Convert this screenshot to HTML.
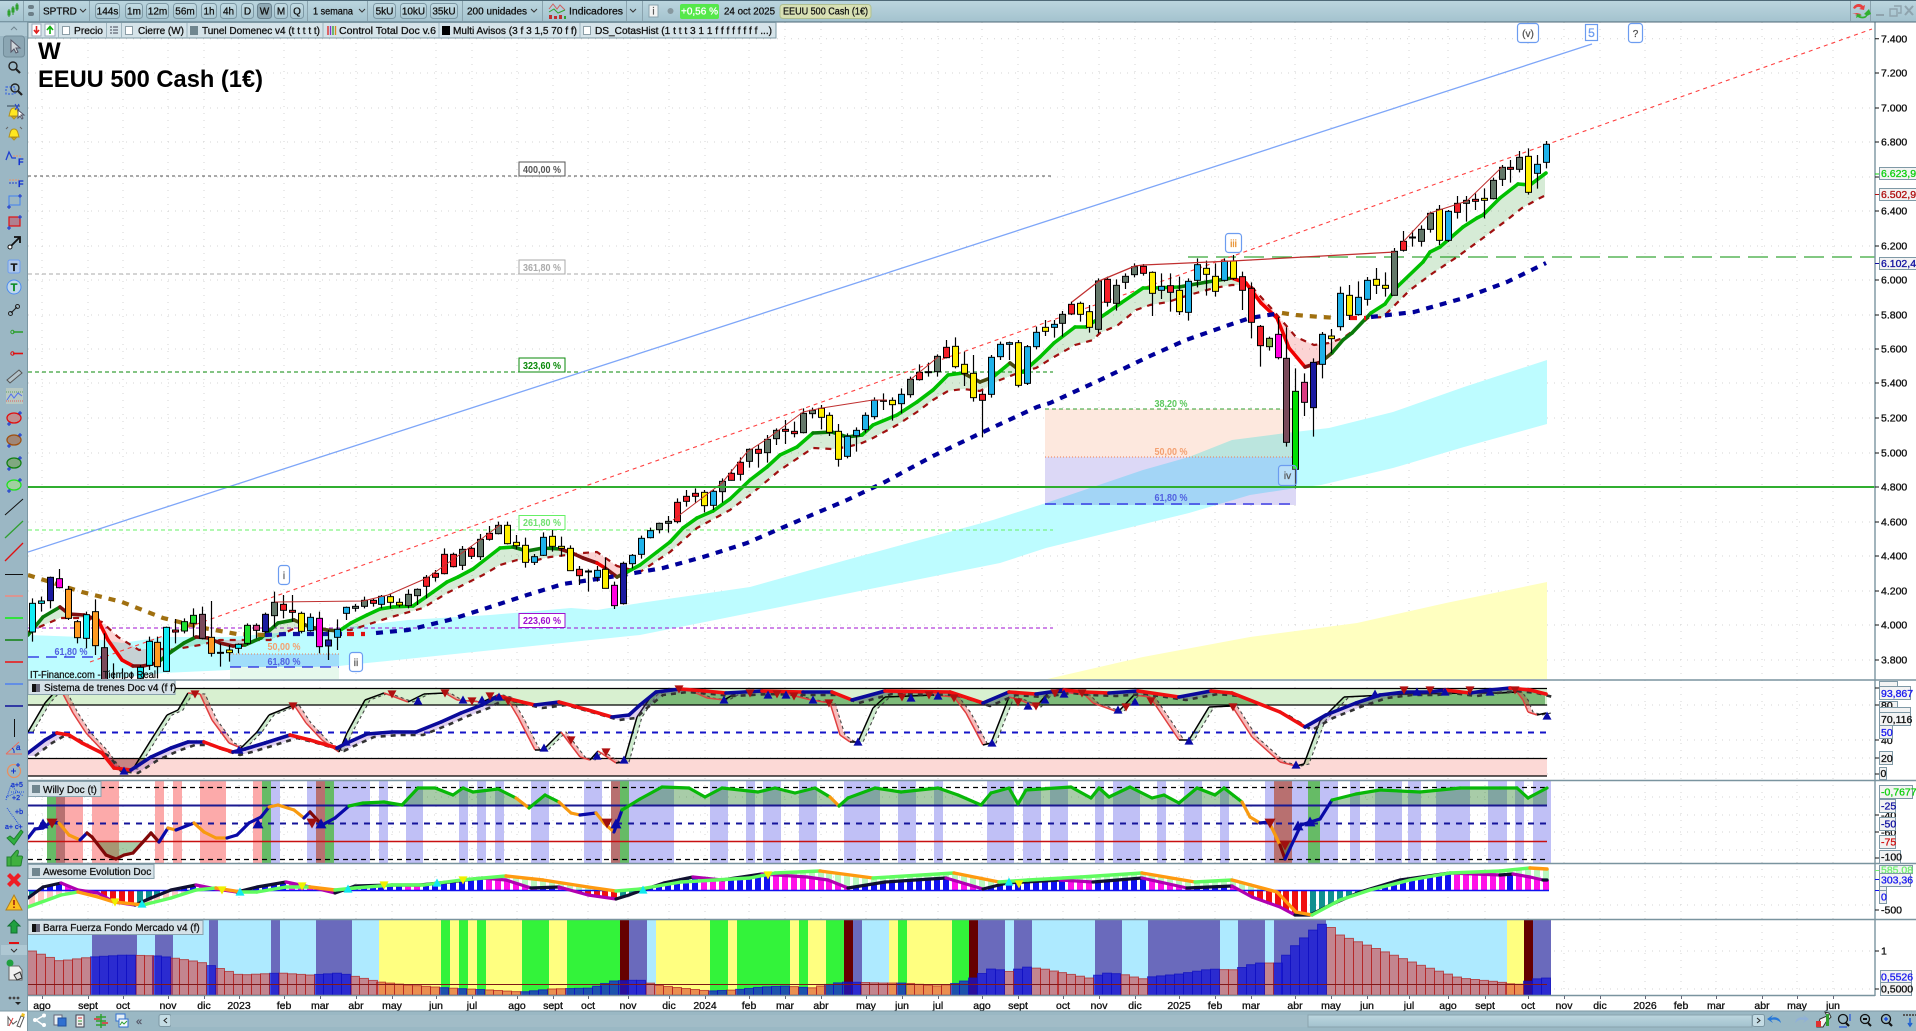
<!DOCTYPE html>
<html lang="es"><head><meta charset="utf-8"><title>EEUU 500 Cash (1€)</title>
<style>
html,body{margin:0;padding:0;background:#fff;width:1916px;height:1031px;overflow:hidden}
svg{display:block}
text{font-family:"Liberation Sans",Arial,sans-serif;font-size:10px;fill:#111;stroke:#111;stroke-width:.28}
.a{font-size:10.5px;stroke-width:.32}
.m{text-anchor:middle}
.b{font-weight:bold;stroke:none}
.btn{fill:url(#gb);stroke:#7d98a4}
.fl{fill:#f3f3f3;stroke:#7f99a6}
.mul{mix-blend-mode:multiply}
</style></head><body>
<svg id="s" xmlns="http://www.w3.org/2000/svg" width="1916" height="1031" viewBox="0 0 1916 1031">
<defs>
<linearGradient id="gb" x1="0" y1="0" x2="0" y2="1"><stop offset="0" stop-color="#c4dce4"/><stop offset="1" stop-color="#a8c6d1"/></linearGradient>
<linearGradient id="gt" x1="0" y1="0" x2="0" y2="1"><stop offset="0" stop-color="#bcd6df"/><stop offset="1" stop-color="#a3c2ce"/></linearGradient>
<clipPath id="cm"><rect x="28" y="22" width="1847" height="657"/></clipPath>
</defs>
<rect width="1916" height="1031" fill="#fff"/>
<g id="grid"></g>
<g clip-path="url(#cm)">
<g id="bands"></g>
<rect class="mul" x="1045" y="409" width="251" height="48" fill="#fde8de"/>
<rect class="mul" x="1045" y="457" width="251" height="48" fill="#dcd8f6"/>
<rect class="mul" x="230" y="654" width="109" height="13" fill="#d8e0fa"/>
<rect x="230" y="667" width="109" height="13" fill="#e6f8ec"/>
<g fill="none" stroke-width="1">
<path d="M28 176H1053" stroke="#555" stroke-dasharray="3 3"/>
<path d="M28 274H1053" stroke="#aaa" stroke-dasharray="4 3"/>
<path d="M28 372H1053" stroke="#0a8a0a" stroke-dasharray="4 3"/>
<path d="M28 530H1053" stroke="#66f066" stroke-dasharray="4 3"/>
<path d="M28 628H1053" stroke="#a010d0" stroke-dasharray="4 3"/>
<path d="M1045 409H1296" stroke="#30a030" stroke-dasharray="4 3"/>
<path d="M1045 457H1296" stroke="#f08050" stroke-dasharray="1 2"/>
<path d="M1045 504H1296" stroke="#2020e0" stroke-width="1.3" stroke-dasharray="11 7"/>
<path d="M230 654H339" stroke="#f08050" stroke-dasharray="1 2"/>
<path d="M230 667H339" stroke="#2020e0" stroke-width="1.3" stroke-dasharray="11 7"/>
<path d="M28 657H102" stroke="#2020e0" stroke-width="1.3" stroke-dasharray="11 7"/>
<path d="M1188 257H1875" stroke="#38a838" stroke-width="1.2" stroke-dasharray="20 8"/>
<path d="M28 552L1592 44" stroke="#7ea6f8" stroke-width="1.3"/>
<path d="M90 662L1872 29" stroke="#ff4040" stroke-width="1.1" stroke-dasharray="4 4"/>
</g>
<g id="main"></g>
<rect x="28" y="486" width="1847" height="2" fill="#30ae30"/>
</g>
<!-- labels main -->
<g>
<text class="m b" x="1171" y="407" textLength="33" lengthAdjust="spacingAndGlyphs" style="fill:#5cc85c">38,20 %</text>
<text class="m b" x="1171" y="455" textLength="33" lengthAdjust="spacingAndGlyphs" style="fill:#f4a070">50,00 %</text>
<text class="m b" x="1171" y="501" textLength="33" lengthAdjust="spacingAndGlyphs" style="fill:#5060e0">61,80 %</text>
<text class="m b" x="284" y="650" textLength="33" lengthAdjust="spacingAndGlyphs" style="fill:#f4a070">50,00 %</text>
<text class="m b" x="284" y="665" textLength="33" lengthAdjust="spacingAndGlyphs" style="fill:#5060e0">61,80 %</text>
<text class="m b" x="71" y="655" textLength="33" lengthAdjust="spacingAndGlyphs" style="fill:#5060e0">61,80 %</text>
<text x="30" y="678" textLength="126" lengthAdjust="spacingAndGlyphs">IT-Finance.com - Tiempo Real</text>
<rect x="519" y="162" width="46" height="14" fill="#fff" stroke="#555"/><text class="m b" x="542" y="173" textLength="38" lengthAdjust="spacingAndGlyphs" style="fill:#555">400,00 %</text>
<rect x="519" y="260" width="46" height="14" fill="#fff" stroke="#aaa"/><text class="m b" x="542" y="271" textLength="38" lengthAdjust="spacingAndGlyphs" style="fill:#aaa">361,80 %</text>
<rect x="519" y="358" width="46" height="14" fill="#fff" stroke="#0a8a0a"/><text class="m b" x="542" y="369" textLength="38" lengthAdjust="spacingAndGlyphs" style="fill:#0a8a0a">323,60 %</text>
<rect x="519" y="515.5" width="46" height="14" fill="#fff" stroke="#66f066"/><text class="m b" x="542" y="526" textLength="38" lengthAdjust="spacingAndGlyphs" style="fill:#70e070">261,80 %</text>
<rect x="519" y="613.5" width="46" height="14" fill="#fff" stroke="#a010d0"/><text class="m b" x="542" y="624" textLength="38" lengthAdjust="spacingAndGlyphs" style="fill:#a010d0">223,60 %</text>
<g fill="#fff" stroke="#6c9cf0" stroke-width="1.2">
<rect x="1517.5" y="23.5" width="21" height="19" rx="3"/><rect x="1585.5" y="24.5" width="12" height="16"/><rect x="1628.5" y="23.5" width="14" height="19" rx="3"/>
<rect x="1225.5" y="233.5" width="16" height="19" rx="3"/><rect x="1278.5" y="465.5" width="18" height="20" rx="3" fill-opacity=".25"/>
<rect x="278.5" y="565.5" width="11" height="19" rx="3"/><rect x="349.5" y="652.5" width="13" height="19" rx="3"/></g>
<text class="m" x="1528" y="37" style="fill:#555;stroke:#555">(v)</text>
<text class="m" x="1591.5" y="37" style="fill:#6c9cf0;stroke:#6c9cf0;font-size:12px">5</text>
<text class="m" x="1635.5" y="37" style="fill:#555;stroke:#555">?</text>
<text class="m" x="1233.5" y="247" style="fill:#e89030;stroke:#e89030">iii</text>
<text class="m" x="1287.5" y="479" style="fill:#555;stroke:#555">iv</text>
<text class="m" x="284" y="579" style="fill:#555;stroke:#555">i</text>
<text class="m" x="356" y="666" style="fill:#555;stroke:#555">ii</text>
<text x="38" y="59" class="b" style="font-size:24px;fill:#000">W</text>
<text x="38" y="87" class="b" textLength="225" lengthAdjust="spacingAndGlyphs" style="font-size:24px;fill:#000">EEUU 500 Cash (1€)</text>
</g>
<!-- panels -->
<rect x="28" y="688" width="1519" height="17" fill="#d8f0d0"/>
<rect x="28" y="758" width="1519" height="18" fill="#fcd9d6"/>
<g id="stoch"></g>
<g id="willy"></g>
<g id="awe"></g>
<g id="barra"></g>
<!-- panel borders -->
<g stroke="#7a949f" fill="none" stroke-width="1.4">
<path d="M28 680H1916M28 780.5H1916M28 863.5H1916M28 919.5H1916M28 995.5H1875M1875 22V996"/>
</g>
<g stroke="#111" stroke-width="1">
<path d="M1875 38.7h4M1875 73h4M1875 108h4M1875 142h4M1875 177h4M1875 211h4M1875 246h4M1875 280h4M1875 315h4M1875 349h4M1875 383h4M1875 418h4M1875 453h4M1875 487h4M1875 522h4M1875 556h4M1875 591h4M1875 625h4M1875 660h4M1875 688h4M1875 705h4M1875 740h4M1875 758h4M1875 774h4M1875 815h4M1875 832h4M1875 858h4M1875 910h4M1875 951h4M1875 989h4"/></g>
<g class="ax">
<text class="a" x="1881" y="42.5">7.400</text><text class="a" x="1881" y="76.5">7.200</text><text class="a" x="1881" y="111.5">7.000</text><text class="a" x="1881" y="145.5">6.800</text>
<text class="a" x="1881" y="214.5">6.400</text><text class="a" x="1881" y="249.5">6.200</text><text class="a" x="1881" y="283.5">6.000</text><text class="a" x="1881" y="318.5">5.800</text>
<text class="a" x="1881" y="352.5">5.600</text><text class="a" x="1881" y="386.5">5.400</text><text class="a" x="1881" y="421.5">5.200</text><text class="a" x="1881" y="456.5">5.000</text>
<text class="a" x="1881" y="490.5">4.800</text><text class="a" x="1881" y="525.5">4.600</text><text class="a" x="1881" y="559.5">4.400</text><text class="a" x="1881" y="594.5">4.200</text>
<text class="a" x="1881" y="628.5">4.000</text><text class="a" x="1881" y="663.5">3.800</text>
<rect class="fl" x="1879.5" y="167.5" width="40" height="12"/><text class="a" x="1881" y="177" style="fill:#10d010;stroke:#10d010">6.623,91</text>
<rect class="fl" x="1879.5" y="188.5" width="40" height="12"/><text class="a" x="1881" y="198" style="fill:#b01010;stroke:#b01010">6.502,93</text>
<rect class="fl" x="1879.5" y="257.5" width="40" height="12"/><text class="a" x="1881" y="267" style="fill:#1010a0;stroke:#1010a0">6.102,42</text>
<path d="M1875 174h4" stroke="#10d010"/><path d="M1875 194.5h4" stroke="#b01010"/><path d="M1875 263.5h4" stroke="#1010a0"/>
<!-- panel 2 -->
<rect class="fl" x="1879.5" y="681.5" width="18" height="6"/>
<rect class="fl" x="1879.5" y="686.5" width="31" height="13"/><text class="a" x="1881" y="697" style="fill:#1a1af0;stroke:#1a1af0">93,867</text>
<rect class="fl" x="1879.5" y="701.5" width="18" height="7"/><text class="a" x="1881" y="709">80</text>
<rect class="fl" x="1879.5" y="707.5" width="31" height="6"/>
<rect class="fl" x="1879.5" y="712.5" width="31" height="13"/><text class="a" x="1881" y="723">70,116</text>
<text class="a" x="1881" y="744">40</text>
<rect class="fl" x="1879.5" y="725.5" width="13" height="13"/><text class="a" x="1881" y="736" style="fill:#1a1af0;stroke:#1a1af0">50</text>
<rect class="fl" x="1879.5" y="751.5" width="13" height="13"/><text class="a" x="1881" y="762">20</text>
<rect class="fl" x="1879.5" y="767.5" width="7" height="12"/><text class="a" x="1880.5" y="777">0</text>
<!-- panel 3 -->
<text class="a" x="1881" y="819">-40</text><text class="a" x="1881" y="836">-60</text>
<rect class="fl" x="1879.5" y="785.5" width="33" height="13"/><text class="a" x="1881" y="795.5" style="fill:#10d010;stroke:#10d010">-0,7677</text>
<rect class="fl" x="1879.5" y="799.5" width="16" height="13"/><text class="a" x="1881" y="809.5" style="fill:#1010a0;stroke:#1010a0">-25</text>
<rect class="fl" x="1879.5" y="817.5" width="16" height="13"/><text class="a" x="1881" y="827.5" style="fill:#1010a0;stroke:#1010a0">-50</text>
<rect class="fl" x="1879.5" y="835.5" width="16" height="13"/><text class="a" x="1881" y="845.5" style="fill:#d01010;stroke:#d01010">-75</text>
<rect class="fl" x="1879.5" y="850.5" width="21" height="13"/><text class="a" x="1881" y="860.5">-100</text>
<!-- panel 4 -->
<rect class="fl" x="1879.5" y="865.5" width="33" height="8"/><text class="a" x="1881" y="873.5" style="fill:#70f070;stroke:#70f070">585,08</text>
<rect class="fl" x="1879.5" y="873.5" width="31" height="13"/><text class="a" x="1881" y="883.5" style="fill:#1a1af0;stroke:#1a1af0">303,36</text>
<rect class="fl" x="1879.5" y="886.5" width="7" height="5"/>
<rect class="fl" x="1879.5" y="890.5" width="7" height="13"/><text class="a" x="1881" y="900.5" style="fill:#1a1af0;stroke:#1a1af0">0</text>
<text class="a" x="1881" y="913.5">-500</text>
<path d="M1875 890.5h4" stroke="#1010f0"/><path d="M1875 870.5h4" stroke="#70f070"/><path d="M1875 879.5h4" stroke="#1010f0"/>
<!-- panel 5 -->
<text class="a" x="1881" y="954.5">1</text>
<rect class="fl" x="1880.5" y="970.5" width="31" height="13"/><text class="a" x="1881" y="980.5" style="fill:#1a1af0;stroke:#1a1af0">0,5526</text>
<rect class="fl" x="1880.5" y="982.5" width="31" height="13"/><text class="a" x="1881" y="992.5">0,5000</text>
</g>
<!-- date axis -->
<g id="dt"></g>
<g>
<text class="a m" x="42" y="1009">ago</text><text class="a m" x="88" y="1009">sept</text><text class="a m" x="123" y="1009">oct</text><text class="a m" x="168" y="1009">nov</text><text class="a m" x="204" y="1009">dic</text><text class="a m" x="239" y="1009">2023</text><text class="a m" x="284" y="1009">feb</text><text class="a m" x="320" y="1009">mar</text><text class="a m" x="356" y="1009">abr</text><text class="a m" x="392" y="1009">may</text><text class="a m" x="436" y="1009">jun</text><text class="a m" x="472" y="1009">jul</text><text class="a m" x="517" y="1009">ago</text><text class="a m" x="553" y="1009">sept</text><text class="a m" x="588" y="1009">oct</text><text class="a m" x="628" y="1009">nov</text><text class="a m" x="669" y="1009">dic</text><text class="a m" x="705" y="1009">2024</text><text class="a m" x="749" y="1009">feb</text><text class="a m" x="785" y="1009">mar</text><text class="a m" x="821" y="1009">abr</text><text class="a m" x="866" y="1009">may</text><text class="a m" x="902" y="1009">jun</text><text class="a m" x="938" y="1009">jul</text><text class="a m" x="982" y="1009">ago</text><text class="a m" x="1018" y="1009">sept</text><text class="a m" x="1063" y="1009">oct</text><text class="a m" x="1099" y="1009">nov</text><text class="a m" x="1135" y="1009">dic</text><text class="a m" x="1179" y="1009">2025</text><text class="a m" x="1215" y="1009">feb</text><text class="a m" x="1251" y="1009">mar</text><text class="a m" x="1295" y="1009">abr</text><text class="a m" x="1331" y="1009">may</text><text class="a m" x="1367" y="1009">jun</text><text class="a m" x="1409" y="1009">jul</text><text class="a m" x="1448" y="1009">ago</text><text class="a m" x="1485" y="1009">sept</text><text class="a m" x="1528" y="1009">oct</text><text class="a m" x="1564" y="1009">nov</text><text class="a m" x="1600" y="1009">dic</text><text class="a m" x="1645" y="1009">2026</text><text class="a m" x="1681" y="1009">feb</text><text class="a m" x="1716" y="1009">mar</text><text class="a m" x="1762" y="1009">abr</text><text class="a m" x="1797" y="1009">may</text><text class="a m" x="1833" y="1009">jun</text>
</g>
<!-- panel labels -->
<g>
<rect x="28" y="680.5" width="147" height="14" fill="#d6e2e8" stroke="#8aa3ae"/><rect x="32" y="684" width="4" height="8" fill="#111"/><rect x="36" y="684" width="4" height="8" fill="#667"/><text x="44" y="691">Sistema de trenes Doc v4 (f f)</text>
<rect x="28" y="781.5" width="73" height="15" fill="#d6e2e8" stroke="#8aa3ae"/><rect x="32" y="785" width="8" height="8" fill="#70868f"/><text x="43" y="793">Willy Doc (t)</text>
<rect x="28" y="864.5" width="126" height="14" fill="#d6e2e8" stroke="#8aa3ae"/><rect x="32" y="868" width="8" height="8" fill="#70868f"/><text x="43" y="875">Awesome Evolution Doc</text>
<rect x="28" y="920.5" width="175" height="14" fill="#d6e2e8" stroke="#8aa3ae"/><rect x="32" y="924" width="4" height="8" fill="#111"/><rect x="36" y="924" width="4" height="8" fill="#667"/><text x="43" y="931">Barra Fuerza Fondo Mercado v4 (f)</text>
</g>
<!-- top toolbar -->
<rect x="0" y="0" width="1916" height="22" fill="url(#gt)"/>
<path d="M0 .5H1916M0 22H1916" stroke="#4f6a78"/>
<g stroke="#8aa3ae"><path d="M23.5 1V21M39.5 1V21M89.5 1V21M307.5 1V21M367.5 1V21M462.5 1V21M542.5 1V21M626.5 1V21M642.5 1V21M1850.5 1V21M1870.5 1V21"/></g>
<g stroke="#2a9a2a" fill="#30b030"><path d="M9 9v8M13 6v9M17 3v8" fill="none"/><rect x="8" y="11" width="2" height="4"/><rect x="12" y="8" width="2" height="4"/><rect x="16" y="5" width="2" height="4"/></g>
<g fill="#6c7f88"><rect x="28" y="5" width="6" height="4" rx="2"/><rect x="28" y="12" width="6" height="4" rx="2"/></g>
<text x="43" y="14.5">SPTRD</text><path d="M80 9l3 3 3-3" fill="none" stroke="#333"/>
<g>
<rect class="btn" x="95.5" y="3.5" width="24" height="15" rx="3"/><text class="m" x="107.5" y="14.5">144s</text>
<rect class="btn" x="125.5" y="3.5" width="17" height="15" rx="3"/><text class="m" x="134" y="14.5">1m</text>
<rect class="btn" x="146.5" y="3.5" width="22" height="15" rx="3"/><text class="m" x="157.5" y="14.5">12m</text>
<rect class="btn" x="173.5" y="3.5" width="23" height="15" rx="3"/><text class="m" x="185" y="14.5">56m</text>
<rect class="btn" x="201.5" y="3.5" width="15" height="15" rx="3"/><text class="m" x="209" y="14.5">1h</text>
<rect class="btn" x="220.5" y="3.5" width="16" height="15" rx="3"/><text class="m" x="228.5" y="14.5">4h</text>
<rect class="btn" x="241.5" y="3.5" width="12" height="15" rx="3"/><text class="m" x="247.5" y="14.5">D</text>
<rect x="257.5" y="3.5" width="14" height="15" rx="3" fill="#8fa8b3" stroke="#6a8390"/><text class="m" x="264.5" y="14.5">W</text>
<rect class="btn" x="274.5" y="3.5" width="13" height="15" rx="3"/><text class="m" x="281" y="14.5">M</text>
<rect class="btn" x="290.5" y="3.5" width="13" height="15" rx="3"/><text class="m" x="297" y="14.5">Q</text>
<text x="313" y="14.5" textLength="40" lengthAdjust="spacingAndGlyphs">1 semana</text><path d="M359 9l3 3 3-3" fill="none" stroke="#333"/>
<rect class="btn" x="373.5" y="3.5" width="22" height="15" rx="3"/><text class="m" x="384.5" y="14.5">5kU</text>
<rect class="btn" x="400.5" y="3.5" width="26" height="15" rx="3"/><text class="m" x="413.5" y="14.5">10kU</text>
<rect class="btn" x="430.5" y="3.5" width="27" height="15" rx="3"/><text class="m" x="444" y="14.5">35kU</text>
<text x="467" y="14.5" textLength="60" lengthAdjust="spacingAndGlyphs">200 unidades</text><path d="M531 9l3 3 3-3" fill="none" stroke="#333"/>
<path d="M549 9l4-5 4 5 3-4 5 5" fill="none" stroke="#d06060"/><path d="M549 12l5-3 4 4 7-3" fill="none" stroke="#30a030"/><path d="M549 15h3v4h-3zM554 16h3v3h-3zM559 15h3v4h-3z" fill="#c03030"/><path d="M564 16h2v3h-2z" fill="#30a030"/>
<text x="569" y="14.5" textLength="54" lengthAdjust="spacingAndGlyphs">Indicadores</text><path d="M630 9l3 3 3-3" fill="none" stroke="#333"/>
<rect x="649" y="5" width="9" height="12" fill="#f4f4f4" stroke="#8aa3ae"/><text class="m" x="653.5" y="14.5" style="fill:#555;stroke:#555">i</text>
<circle cx="670.5" cy="11" r="3" fill="#87989f"/>
<rect x="680" y="4" width="39" height="15" rx="2" fill="#55e84a"/><text class="m" x="699.5" y="14.5" style="fill:#fff;stroke:#fff">+0,56 %</text>
<text x="724" y="14.5" textLength="51" lengthAdjust="spacingAndGlyphs">24 oct 2025</text>
<rect x="780" y="4.5" width="91" height="14" rx="3" fill="#d8e0b4" stroke="#b0c090"/><text x="783" y="14.5" textLength="85" lengthAdjust="spacingAndGlyphs">EEUU 500 Cash (1€)</text>
</g>
<path d="M1853 8c2-5 8-5 10-2l2-1-1 5-5-1 2-1c-2-2-5-1-6 1zm-1 5l5 1-2 1c2 1 5 1 6-1l-4-1" fill="#e84040"/>
<path d="M1867 16c-1 3-7 3-9 1l-2 1 1-4 5 1-2 1c2 1 5 1 6-1l-2-1 5-5 2 5z" fill="#30b030"/>
<path d="M1876 15h8" stroke="#8fa3ad" stroke-width="2"/><path d="M1894 6h7v7h-3M1890 9h7v7h-7z" fill="none" stroke="#8fa3ad" stroke-width="1.4"/><path d="M1905 6l8 9M1913 6l-8 9" stroke="#8fa3ad" stroke-width="2"/>
<!-- legend row -->
<rect x="28" y="22.5" width="748" height="15.5" fill="#d5e3e9" stroke="#7d98a4"/>
<g stroke="#9fb5bf"><path d="M58.5 23V38M106.5 23V38M121.5 23V38M187 23V38M323 23V38M439 23V38M580 23V38"/></g>
<rect x="32" y="24" width="9" height="12" fill="#fff" stroke="#9ab"/><path d="M36.5 26v6m-2.500-2l2.500 3 2.500-3" stroke="#e02020" fill="none" stroke-width="1.600"/>
<rect x="45" y="24" width="10" height="12" fill="#fff" stroke="#9ab"/><path d="M50 34v-7m-3 3l3-3.500 3 3.500" stroke="#10b010" fill="none" stroke-width="1.600"/>
<rect x="62.500" y="26.500" width="7" height="8" fill="#fff" stroke="#8c9ea7"/><text x="74" y="34" textLength="29" lengthAdjust="spacingAndGlyphs">Precio</text>
<path d="M110 27h2M113 27h5M110 30h2M113 30h5M110 33h2M113 33h5" stroke="#445"/>
<rect x="125.500" y="26.500" width="7" height="8" fill="#fff" stroke="#8c9ea7"/><text x="138" y="34" textLength="46" lengthAdjust="spacingAndGlyphs">Cierre (W)</text>
<rect x="190" y="26" width="8" height="9" fill="#70868f"/><text x="202" y="34" textLength="118" lengthAdjust="spacingAndGlyphs">Tunel Domenec v4 (t t t t t)</text>
<path d="M328 26v9" stroke="#e02020" stroke-width="1.300"/><path d="M330.500 26v9" stroke="#8030d0" stroke-width="1.300"/><path d="M333 26v9" stroke="#30a030" stroke-width="1.300"/><path d="M335.500 26v9" stroke="#e08020" stroke-width="1.300"/>
<text x="339" y="34" textLength="97" lengthAdjust="spacingAndGlyphs">Control Total Doc v.6</text>
<rect x="442" y="26" width="8" height="9" fill="#000"/><text x="453" y="34" textLength="124" lengthAdjust="spacingAndGlyphs">Multi Avisos (3 f 3 1,5 70 f f)</text>
<rect x="583.500" y="26.500" width="7" height="8" fill="#fff" stroke="#8c9ea7"/><text x="595" y="34" textLength="177" lengthAdjust="spacingAndGlyphs">DS_CotasHist (1 t t t 3 1 1 f f f f f f f f ...)</text>
<!-- left toolbar -->
<rect x="0" y="22" width="28" height="989" fill="#9bb7c4"/>
<path d="M27.500 22V1031" stroke="#7d98a4"/>
<rect x="0" y="23" width="27" height="13" fill="#aec8d3"/>
<path d="M11 30l3-3 3 3" fill="none" stroke="#708590"/>
<rect x="3.500" y="36" width="21" height="21" rx="3" fill="#8ba6b3" stroke="#718c99"/>
<path d="M11 40v12l3-3 2 4 2-1-2-4h4z" fill="#cfd6da" stroke="#556"/>
<g fill="none" stroke="#222" stroke-width="1.400"><circle cx="13" cy="66" r="4"/><path d="M16 69l4 4" stroke-width="2.200"/><circle cx="15" cy="88" r="4"/><path d="M18 91l4 4" stroke-width="2.200"/></g>
<rect x="6" y="87" width="9" height="7" fill="none" stroke="#2050e0" stroke-dasharray="2 1.500"/>
<path d="M9 116c1-3 1-8 5-8s4 5 5 8zM12 117h4l-2 2z" fill="#ffe820" stroke="#b09020"/><path d="M7 106h13" stroke="#345"/><path d="M15 104l4 6M19 104l-4 6" stroke="#2040d0"/><path d="M18 110v8l2-2 2 3 1-1-2-3h3z" fill="#fff" stroke="#556"/>
<path d="M9 137c1-3 1-8 5-8s4 5 5 8zM12 138h4l-2 2z" fill="#ffe820" stroke="#b09020"/><path d="M8 127l-2 2M20 127l2 2" stroke="#666"/>
<path d="M6 160l3-8 3 6h4" fill="none" stroke="#2040d0" stroke-width="1.300"/><path d="M13 156h9" stroke="#f09060" stroke-dasharray="2 1"/><text x="18" y="165" style="fill:#1030d0;stroke:#1030d0;font-weight:bold;font-size:9px">F</text>
<path d="M9 180h10" stroke="#f09060" stroke-dasharray="2 1"/><path d="M9 183h9" stroke="#2040d0" stroke-dasharray="2 1"/><text x="18" y="187" style="fill:#1030d0;stroke:#1030d0;font-weight:bold;font-size:9px">F</text>
<rect x="9" y="196" width="11" height="9" fill="none" stroke="#4080f0"/><path d="M7 207h4M9 205v4M18 196h4M20 194v4" stroke="#1030d0"/>
<rect x="9" y="217" width="11" height="9" fill="#b08090" stroke="#e01010" stroke-width="1.200"/><path d="M7 228h4M9 226v4M18 217h4M20 215v4" stroke="#1030d0"/>
<path d="M10 247l9-9M14 237h6v6" fill="none" stroke="#111" stroke-width="1.800"/><circle cx="10" cy="247" r="2" fill="#fff" stroke="#111"/>
<rect x="8" y="260" width="12" height="13" rx="2" fill="#acc6e8" stroke="#6c9cf0"/><text class="m" x="14" y="271" style="font-weight:bold;font-size:11px;fill:#111">T</text>
<circle cx="14" cy="287" r="7" fill="#c0d8ec" stroke="#4c8cf0"/><text class="m" x="14" y="291" style="font-weight:bold;font-size:11px;fill:#0a8a20;stroke:#0a8a20">T</text>
<path d="M11 313l6-6" stroke="#222" stroke-width="1.200"/><circle cx="10.500" cy="313.500" r="2" fill="none" stroke="#222"/><circle cx="17.500" cy="306.500" r="2" fill="none" stroke="#222"/>
<path d="M13 332h10" stroke="#30a030" stroke-width="1.600"/><circle cx="12.500" cy="332" r="1.700" fill="none" stroke="#30a030"/>
<path d="M13 353.500h10" stroke="#e01010" stroke-width="1.600"/><circle cx="12.500" cy="353.500" r="1.700" fill="none" stroke="#e01010"/>
<path d="M7 380l12-10 3 3-12 10z" fill="#b4c4cb" stroke="#555"/>
<rect x="6" y="388" width="17" height="16" fill="#b8c9c2"/><path d="M6 392h17" stroke="#60a060" stroke-dasharray="1 1"/><path d="M6 401h17" stroke="#e06060" stroke-dasharray="1 1"/><path d="M7 400l4-6 3 4 4-5 4 3" fill="none" stroke="#5070f0"/>
<g stroke-width="1.300"><ellipse cx="14" cy="418" rx="7" ry="5" fill="#c09090" stroke="#e01010"/><ellipse cx="14" cy="440" rx="7" ry="5" fill="#a08878" stroke="#a05010"/><ellipse cx="14" cy="463" rx="7" ry="5" fill="#80a880" stroke="#108010"/><ellipse cx="14" cy="485" rx="7" ry="5" fill="#a0d0a0" stroke="#20e020"/></g>
<path d="M7 424h4M9 422v4M18 413h4M20 411v4M7 446h4M9 444v4M18 435h4M20 433v4M7 469h4M9 467v4M18 458h4M20 456v4M7 491h4M9 489v4M18 480h4M20 478v4" stroke="#1030d0"/>
<path d="M5 515L23 499" stroke="#111"/><path d="M5 538L23 521" stroke="#30a030" stroke-width="1.300"/>
<path d="M5 561L23 543" stroke="#e01010" stroke-width="1.300"/>
<path d="M5 574.500h18" stroke="#111"/><path d="M5 596h18" stroke="#f08a80" stroke-width="1.500"/><path d="M5 618h18" stroke="#10f010" stroke-width="1.500"/><path d="M5 640h18" stroke="#108010" stroke-width="1.500"/><path d="M5 662h18" stroke="#f01010" stroke-width="1.500"/><path d="M5 684h18" stroke="#5080f0" stroke-width="1.500"/><path d="M5 706h18" stroke="#10109a" stroke-width="1.500"/><path d="M14.500 719v18" stroke="#111"/>
<path d="M6 754l13-12M6 754h16" fill="none" stroke="#e87060"/><path d="M14 753a5 5 0 0 0-2-5" fill="none" stroke="#1030d0"/><text x="16" y="750" style="fill:#1030d0;stroke:#1030d0;font-size:8px">a</text>
<circle cx="14" cy="771" r="6.500" fill="none" stroke="#e89060" stroke-width="1.300"/><path d="M11 771h5M13.500 768.500v5M16 765h4M18 763v4" stroke="#1030d0"/>
<path d="M6 800l5-15M11 792h14M11 786l12 10M6 797l12-5" stroke="#2050e0" stroke-dasharray="1 1" fill="none"/><text x="11" y="787" style="fill:#1030d0;stroke:#1030d0;font-size:7px">a+5</text><text x="12" y="800" style="fill:#1030d0;stroke:#1030d0;font-size:7px">+2</text>
<path d="M7 808l13 18" stroke="#2050e0" stroke-dasharray="1 1"/><text x="15" y="814" style="fill:#1030d0;stroke:#1030d0;font-size:7px">+b</text><text x="5" y="829" style="fill:#1030d0;stroke:#1030d0;font-size:7px">a+</text><text x="15" y="829" style="fill:#1030d0;stroke:#1030d0;font-size:7px">c+</text>
<path d="M7 838l3-2 4 3 7-9 2 2-9 13z" fill="#30b040" stroke="#208030"/>
<path d="M7 857h4v9H7zM11 857l5-6c2-2 3 0 2 3l-1 2h4c2 0 2 2 1 3l-1 6c0 1-1 1-2 1h-8z" fill="#40b040" stroke="#208030"/>
<path d="M7 876l3-3 4 4 4-4 3 3-4 4 4 4-3 3-4-4-4 4-3-3 4-4z" fill="#ee1c24"/>
<path d="M14 895l8 15H6z" fill="#fcc020" stroke="#b08020"/><path d="M14 900v5M14 906.500v1.500" stroke="#a02010" stroke-width="1.600"/>
<path d="M14 920l6 6h-3v7h-6v-7H8z" fill="#20a040" stroke="#107030"/>
<rect x="9" y="942" width="10" height="2" fill="#e01010"/>
<rect x="1" y="945" width="26" height="10" fill="#aec8d3"/><path d="M11 949l3 3 3-3" fill="none" stroke="#333"/>
<path d="M9 966h10l3 4v10H9z" fill="#f0f0f0" stroke="#666"/><circle cx="10" cy="963" r="3.500" fill="#20a040"/><path d="M14 975l6-3 2 6-5 2z" fill="#ddd" stroke="#333"/>
<g fill="#444"><circle cx="10" cy="998" r="1.400"/><circle cx="14" cy="998" r="1.400"/><circle cx="18" cy="998" r="1.400"/></g><path d="M15 1002h6l-3 3z" fill="#222"/>
<path d="M0 1011H28" stroke="#7d98a4"/>
<path d="M8 1026v-9l5 7 4-3M17 1026l4-10 3 1-4 10z" fill="none" stroke="#555"/><path d="M21 1016l3 1 1-3-3-1z" fill="#f0c020"/><path d="M9 1026l4-8" stroke="#e04040"/>
<!-- bottom bar -->
<rect x="28" y="1011" width="1888" height="20" fill="#9ab8c4"/>
<path d="M28 1011H1916" stroke="#7d98a4"/>
<rect x="159" y="1014.500" width="12" height="12" rx="2" fill="#c4dce4" stroke="#7d98a4"/>
<path d="M167 1018l-3 2.500 3 2.500" fill="none" stroke="#222"/>
<rect x="171" y="1015" width="1581" height="12" fill="#a1bcc7"/>
<rect x="1308" y="1015" width="444" height="12" fill="url(#gt)" stroke="#8aa3ae"/>
<rect x="1752.500" y="1014.500" width="12" height="12" rx="2" fill="#c4dce4" stroke="#7d98a4"/><path d="M1757 1018l3 2.500-3 2.500" fill="none" stroke="#222"/>
<path d="M36 1020l7-4M36 1020l7 5" stroke="#fff" stroke-width="1.500"/><circle cx="35" cy="1020" r="2" fill="#fff"/><circle cx="44" cy="1015.500" r="2" fill="#fff"/><circle cx="44" cy="1025" r="2" fill="#fff"/>
<rect x="54" y="1015" width="8" height="10" fill="#e8f0f4" stroke="#667"/><rect x="58" y="1018" width="8" height="8" fill="#3070d0" stroke="#2050a0"/>
<rect x="76" y="1015" width="8" height="12" fill="#f0f0f0" stroke="#445"/><path d="M78 1018h4" stroke="#e03030"/><path d="M78 1021h4" stroke="#30a030"/><path d="M78 1024h4" stroke="#333"/>
<path d="M101 1014v14M96 1017h10M96 1021h10M96 1025h10" stroke="#30a030" stroke-width="1.500"/><path d="M94 1019h6M102 1023h6" stroke="#e03030" stroke-width="1.500"/>
<rect x="116" y="1014" width="9" height="7" fill="#e8f0f4" stroke="#3070d0"/><rect x="119" y="1019" width="9" height="8" fill="#f4f8fb" stroke="#3070d0"/><path d="M120 1025l2-3 2 2 3-3" fill="none" stroke="#30a030"/>
<text class="m" x="139" y="1025" style="font-size:11px;fill:#556;stroke:#556">«</text>
<path d="M1781 1023c-1-5-5-7-10-5l2-3-6 4 6 4-2-3c4-1 7 0 10 3z" fill="#2878d8"/>
<path d="M1795 1023c1-5 5-7 10-5l-2-3 6 4-6 4 2-3c-4-1-7 0-10 3z" fill="#8fb0d8"/>
<path d="M1817 1027l3-8 7-3-2-4 4 1 2 4-5 5-3 5z" fill="#f4f4f4" stroke="#333"/><rect x="1816" y="1021" width="5" height="6" fill="#e03030"/><rect x="1826" y="1014" width="3" height="12" fill="#30a030"/>
<g fill="none" stroke="#111"><circle cx="1843" cy="1019" r="4.500" stroke-width="1.300"/><path d="M1846 1023l3 3" stroke-width="2.200"/><circle cx="1865" cy="1019" r="4.500" stroke-width="1.300"/><path d="M1868 1023l3 3M1863 1019h4" stroke-width="2"/><circle cx="1886" cy="1019" r="4.500" stroke-width="1.300"/><path d="M1889 1023l3 3" stroke-width="2.200"/></g>
<path d="M1884 1019h4M1886 1017v4" stroke="#1040e0" stroke-width="1.300"/><path d="M1839 1027h8" stroke="#1040e0"/><path d="M1850 1014v7" stroke="#1040e0"/>
<path d="M1903 1015h13" stroke="#555" stroke-width="2" stroke-dasharray="2 1"/><path d="M1910 1018v7m-2-2l2 3 2-3" stroke="#2060d0" fill="none" stroke-width="1.500"/>
</svg>
<script>
(function(){
var NS='http://www.w3.org/2000/svg';
function G(i){return document.getElementById(i)}
function E(g,t,a){var e=document.createElementNS(NS,t);for(var k in a)e.setAttribute(k,a[k]);g.appendChild(e);return e}
function P(s){return s.trim().split(/\s+/).map(function(t){var c=t.match(/[a-z]$/);var p=parseFloat(t.split(',')[1]);return [parseFloat(t),p,c?c[0]:null]})}
function I(pts,x){if(x<=pts[0][0])return pts[0][1];for(var i=1;i<pts.length;i++){if(x<=pts[i][0]){var a=pts[i-1],b=pts[i];return a[1]+(b[1]-a[1])*(x-a[0])/(b[0]-a[0])}}return pts[pts.length-1][1]}
function PL(p){return p.map(function(q){return q[0]+','+q[1]}).join(' ')}
function line(g,p,c,w,d){var a={points:PL(p),fill:'none',stroke:c,'stroke-width':w,'stroke-linejoin':'round'};if(d)a['stroke-dasharray']=d;E(g,'polyline',a)}
function cline(g,p,map,w){for(var i=1;i<p.length;i++){E(g,'line',{x1:p[i-1][0],y1:p[i-1][1],x2:p[i][0],y2:p[i][1],stroke:map[p[i][2]],'stroke-width':w,'stroke-linecap':'round'})}}
function tri(g,x,y,up,c,s){s=s||5;E(g,'path',{d:up?'M'+x+' '+(y-s)+'l'+s+' '+(s*1.800)+'h-'+(2*s)+'z':'M'+x+' '+(y+s)+'l'+s+' -'+(s*1.800)+'h-'+(2*s)+'z',fill:c})}
/* grid */
var gr=G('grid'),d='',ys=[38.7,73,108,142,177,211,246,280,315,349,383,418,453,487,522,556,591,625,660,705,740,758,774,797,815,832,850,877,905,951,989];
ys.forEach(function(y){d+='M28 '+y+'H1875'});
var xs=[42,88,123,168,204,239,284,320,356,392,436,472,517,553,588,628,669,705,749,785,821,866,902,938,982,1018,1063,1099,1135,1179,1215,1251,1295,1331,1367,1409,1448,1485,1528,1564,1600,1645,1681,1716,1762,1797,1833];
xs.forEach(function(x){d+='M'+x+' 22V995'});
E(gr,'path',{d:d,stroke:'#d4d4d4','stroke-dasharray':'1 6',fill:'none'});
var dt='';xs.forEach(function(x){dt+='M'+x+'.5 996v3'});E(G('dt'),'path',{d:dt,stroke:'#667'});
/* bands */
var b=G('bands');
E(b,'polygon',{points:'1043,680 1143,657 1250,637 1357,623 1446,603 1547,582 1547,680',fill:'#ffffc0'});
E(b,'polygon',{points:'28,635 82,637 122,643 163,637 229,637 339,628 408,620 490,615 571,608 597,610 640,603 750,587 850,559 993,520 1046,503 1093,487 1143,470 1189,457 1232,440 1286,433 1329,428 1393,412 1464,387 1547,360 1547,424 1464,447 1393,468 1321,485 1296,488 1250,495 1189,513 1107,533 1046,548 1000,563 800,603 640,635 367,663 339,666 229,670 163,673 100,680 28,680',fill:'#bdfcff'});
/* thick line / lower */
var U=P('28,635d 43,617d 60,607d 69,614m 84,615m 98,620m 108,640r 122,660r 133,666r 143,666m 157,663m 171,652d 184,643d 196,637d 208,638m 220,643m 233,646m 245,645m 261,638d 278,623d 294,620d 310,627b 327,630b 339,631b 351,623g 367,615g 380,609g 393,607g 413,606g 433,592g 447,582g 458,577g 473,569g 500,548g 513,547g 527,551d 543,548d 560,549d 572,553m 583,558m 597,563m 605,568r 617,577m 627,572b 640,565g 657,552g 670,542g 683,528g 697,518g 713,511g 730,499g 750,480g 767,467g 780,455g 797,447g 813,433g 832,432d 847,437d 862,435d 873,425g 897,415g 917,402g 933,390g 948,375g 963,373g 980,382b 993,377b 1010,363g 1018,369b 1023,372b 1040,357g 1054,343g 1075,327g 1086,327g 1107,313g 1121,303g 1143,288g 1154,288g 1179,287g 1207,282d 1232,278d 1246,283r 1261,303r 1277,318r 1289,348r 1305,367r 1321,362m 1332,353b 1343,340d 1352,333d 1371,313d 1385,304g 1397,287g 1423,262g 1430,252g 1440,247g 1463,227g 1477,218g 1483,215g 1500,198g 1518,184g 1530,185g 1546,173g');
var L=P('28,632 60,618 84,618 102,622 118,637 139,650 153,648 170,650 200,645 220,640 245,640 270,640 295,628 327,630 351,630 388,618 423,608 447,593 463,585 483,575 500,565 517,560 537,560 550,557 567,555 583,553 597,552 617,566 640,572 670,552 697,528 730,510 750,495 780,470 813,448 832,449 847,447 862,443 873,438 897,425 917,412 933,400 948,391 963,389 980,391 1000,380 1018,373 1036,368 1054,357 1075,345 1093,340 1100,333 1118,325 1136,310 1150,305 1168,302 1189,295 1214,288 1232,285 1250,285 1271,308 1296,337 1314,345 1329,343 1343,338 1357,328 1368,318 1383,317 1410,290 1433,273 1457,257 1483,238 1507,220 1522,208 1540,198 1546,195');
var m=G('main'),gp='',rp='';
for(var x=28;x<1546;x+=2){var u=I(U,x),l=I(L,x);var s='M'+x+' '+u+'V'+l;if(u<l)gp+=s;else rp+=s}
E(m,'path',{d:gp,stroke:'#0a8a0a','stroke-opacity':'.17','stroke-width':2,fill:'none'});
E(m,'path',{d:rp,stroke:'#f01010','stroke-opacity':'.18','stroke-width':2,fill:'none'});
line(m,L,'#a01010',2.200,'6 6');
cline(m,U,{g:'#00c000',d:'#0a7a0a',m:'#801010',r:'#f00000',b:'#4a4a10'},3.600);
var D='7 7';
line(m,P('28,575 82,592 122,602 163,618 204,628 237,634 265,635'),'#a07010',4.200,D);
line(m,P('265,635 286,634 347,634'),'#1010a0',4.200,D);
line(m,P('347,634 365,634'),'#e01010',4.200,D);
line(m,P('376,633 408,630 449,620 487,608 527,595 563,584 597,579 623,575 663,568 703,557 747,543 807,517 847,500 883,483 933,456 983,432 1037,407 1050,403 1100,380 1150,356 1186,340 1229,325 1250,318 1275,314'),'#00009a',4.200,D);
line(m,P('1282,313 1296,315 1321,317 1339,318'),'#a07010',4.200,D);
line(m,P('1350,318 1366,318'),'#f01010',4.200,D);
line(m,P('1371,317 1414,312 1464,298 1507,282 1546,263'),'#00009a',4.200,D);
/* candles */
var col={B:'#1fb2ea',Y:'#fff000',G:'#64786a',R:'#f51f28',M:'#ff00e0',N:'#1a1aa0',C:'#14ecf4',O:'#ff9a20',P:'#d83a80',L:'#00e000',T:'#7a4a5a',V:'#80b040',K:'#000',Q:'#20e030'};
var segs=[
[130,'B 33 43 97 115|B 75 103 130 176|Y 55 79 187 194|G 63 82 118 127|R 90 112 118 158|G 105 112 148 168|G 143 151 206 208|Y 175 205 211 265|R 190 208 214 240|G 198 211 220 275|R 198 220 247 266|B 240 244 331 336|Y 225 238 331 345|G 245 250 298 308|G 286 298 334 350|K 302 321 323 350|R 303 334 361 365|G 354 364 496 497|Y 427 466 475 500|Y 414 448 466 492|B 441 451 508 527|B 454 502 554 557|Y 465 496 556 570'],
[230,'B 170 190 290 302|Y 297 318 326 370|B 306 313 403 445|N 385 397 533 620|P 430 457 517 558|L 415 484 718 775|T 292 385 637 650|M 262 313 383 388|V 320 325 350 362|R 285 289 347 410|R 157 175 277 325|R 125 140 181 240|Y 75 93 145 150|B 85 93 151 155|Y 100 139 184 200|Y 92 115 133 197|B 85 104 151 172|B 145 154 247 272|Y 140 181 245 255|R 130 167 187 245|B 130 169 181 207|Y 124 127 190 258|R 102 109 130 137|G 100 110 134 142|G 130 139 157 177|G 148 166 220 242|R 140 148 217 230|G 145 153 298 310|Y 225 245 292 308|Y 215 220 253 275|R 215 223 252 255|G 243 253 280 320|B 270 283 292 323|Y 270 292 304 318|B 290 307 350 358|B 345 350 460 465|Y 330 338 466 472|B 335 338 343 390|B 335 343 380 390'],
[320,'B 105 112 223 233|R 212 223 241 352|Y 105 160 233 245|Y 95 133 160 198|Y 52 79 140 145|R 60 82 113 115|G 103 109 155 170|K 128 155 157 170|R 133 157 179 182|G 170 178 224 233|B 205 223 251 280|Y 232 241 254 302|K 220 241 243 270|B 232 241 290 298|B 277 286 329 338|B 322 331 347 395|B 340 349 409 415|Y 312 334 418 440|Y 277 286 337 348|Y 255 265 292 328|G 263 271 281 295|G 265 280 338 340|R 305 334 341 352|R 300 328 334 372|G 325 331 356 375|G 345 358 398 428|R 375 388 400 443|G 385 388 424 443|R 412 427 463 482|R 448 460 481 482|G 475 484 515 548|B 510 514 556 570|Y 510 517 557 577|R 505 520 529 548|R 510 529 544 560'],
[480,'R 55 67 125 130|G 108 124 130 158|G 128 130 149 160|B 143 152 173 175|B 167 175 223 236|B 222 226 251 265|N 245 250 371 374|M 305 316 377 387|Y 232 268 325 325|B 258 271 292 305|K 268 273 276 335|R 258 268 287 315|Y 196 205 272 272|Y 170 199 205 230|Y 150 169 199 215|B 157 172 226 228|B 222 230 247 255|Y 173 196 247 263|Y 165 187 197 208|Y 125 136 191 193|G 125 136 161 163|R 138 160 178 182|G 162 178 230 240|R 200 205 229 237|G 198 208 256 270|R 218 223 260 262|R 205 223 281 283|R 270 280 292 305|R 285 292 319 355|G 325 328 347 375|G 328 343 377 385|Y 355 367 375 382|Y 340 350 367 385|B 345 349 373 385|R 355 361 370 380|G 350 361 379 385|G 372 379 385 395|B 380 382 400 420'],
[540,'B 238 268 292 330|N 270 300 318 360|M 215 235 320 340|B 220 232 272 275|Y 215 220 274 280|R 165 211 217 245|R 165 193 211 235|G 155 187 227 260|N 218 223 275 280|P 250 256 271 295|Q 250 256 310 315|C 310 313 325 340|Y 315 330 338 365|K 310 337 340 380|O 183 292 340 350|T 200 223 295 298|Q 205 226 250 290|Q 235 245 273 280|R 237 270 276 310|C 260 262 394 395|O 290 307 380 415|C 290 304 376 390|C 375 382 415 420|K 395 420 420 420|K 385 420 420 420|K 370 420 420 420|T 280 323 420 420|O 178 215 317 345|C 215 224 295 325|O 240 245 293 310|O 138 148 235 240|M 87 116 143 145|N 110 112 182 205|C 170 183 190 215|C 175 190 276 305']
];
var k=0,wick='',ca=G('main');
var bodies=[];
segs.forEach(function(sg){var base=sg[0];sg[1].split('|').forEach(function(t){var f=t.split(' '),x=Math.round(1546.3-8.96*k)+.5;k++;
var a=base+f[1]/3,c1=base+f[2]/3,c2=base+f[3]/3,e=base+f[4]/3;
wick+='M'+x+' '+a+'V'+e;bodies.push([x,c1,Math.max(c2-c1,1),f[0]])})});
E(ca,'path',{d:wick,stroke:'#000','stroke-width':1.200,fill:'none'});
bodies.forEach(function(b){E(ca,'rect',{x:b[0]-3,y:b[1],width:6,height:b[2],fill:col[b[3]],stroke:'#000','stroke-width':1})});
line(m,P('275,602 363,601 388,595 427,578 480,540 500,525'),'#c03030',1);
line(m,P('673,520 722,483 747,452 767,439 803,412 822,408 873,400 887,400'),'#c03030',1);
line(m,P('910,380 938,357'),'#c03030',1);
line(m,P('1072,302 1099,281 1135,266 1143,265 1232,261 1395,252'),'#c03030',1.300);
line(m,P('1403,242 1430,213 1467,201 1502,167'),'#c03030',1);
/* stochastic */
var st=G('stoch');
var HV=P('28,753 45,740 57,733 69,735 82,743 102,753 114,768 131,770 151,757 171,748 188,742 204,742 220,748 233,752 245,749 265,743 290,735 310,740 337,748 347,743 367,734 392,732 416,732 441,722 461,713 482,705 498,696 522,702 535,705 559,702 588,710 612,717 629,715 640,705 656,692 681,689 705,691 726,693 762,691 803,692 832,692 852,700 885,691 950,692 983,703 1009,692 1036,694 1064,690 1085,692 1109,693 1138,691 1179,697 1211,691 1232,693 1280,712 1305,727 1326,715 1356,703 1380,695 1405,692 1430,692 1445,690 1470,693 1490,690 1510,688 1530,690 1546,694');
var zf='',zr='';
for(var x2=28;x2<1546;x2+=2){var yh=I(HV,x2);if(yh<705)zf+='M'+x2+' '+yh+'V705';else if(yh>758)zr+='M'+x2+' 758V'+yh}
E(st,'path',{d:zf,stroke:'#2a8a2a','stroke-opacity':'.52','stroke-width':2});
E(st,'path',{d:zr,stroke:'#801010','stroke-opacity':'.42','stroke-width':2});
[[688.5,'#000',1.300],[705,'#000',1.300],[758.5,'#000',1.300],[776,'#000',1.300]].forEach(function(a){E(st,'path',{d:'M28 '+a[0]+'H1547',stroke:a[1],'stroke-width':a[2]})});
E(st,'path',{d:'M28 732.500H1547',stroke:'#1414c8','stroke-width':2,'stroke-dasharray':'6 6'});
var OSC=P('28,732 45,703 53,694 63,694 73,713 86,733 102,750 116,769 133,769 151,740 167,715 178,710 188,693 200,694 212,720 229,743 241,748 257,732 269,715 294,705 306,723 322,740 339,752 347,733 365,700 384,693 408,702 424,694 445,693 457,700 482,702 498,695 506,697 518,717 535,750 543,750 561,732 580,757 590,760 598,751 616,763 624,762 637,717 652,695 664,690 689,690 707,698 724,700 738,692 779,692 811,700 830,703 840,735 850,742 858,742 873,708 885,697 934,695 954,697 966,713 983,745 991,743 1009,697 1020,700 1036,707 1048,693 1064,692 1085,695 1093,703 1118,712 1134,695 1150,697 1179,740 1189,740 1209,707 1232,706 1252,737 1280,762 1296,766 1304,764 1320,721 1344,697 1405,694 1470,693 1500,693 1517,692 1523,700 1528,712 1537,715 1546,713');
var gf='',rf='';
for(x=28;x<1546;x+=2){var o=I(OSC,x),o2=I(OSC,x-5);var s2='M'+x+' '+o+'V'+o2;if(o<o2)gf+=s2;else rf+=s2}
E(st,'path',{d:gf,stroke:'#0a9a0a','stroke-opacity':'.2','stroke-width':2});
E(st,'path',{d:rf,stroke:'#e01010','stroke-opacity':'.28','stroke-width':2});
line(st,OSC.map(function(p){return [p[0]+5,p[1]]}),'#444',1.100,'3 3');
for(var i=1;i<OSC.length;i++){var a=OSC[i-1],c=OSC[i];E(st,'line',{x1:a[0],y1:a[1],x2:c[0],y2:c[1],stroke:c[1]>a[1]+.5?'#e04040':'#000','stroke-width':1.500})}
var HV2=HV.map(function(p){return [p[0]+7,p[1]+3]});
var pf='';for(x=28;x<1546;x+=2){var h=I(HV,x),h2=I(HV2,x);pf+='M'+x+' '+h+'V'+h2}
E(st,'path',{d:pf,stroke:'#8040c0','stroke-opacity':'.25','stroke-width':2});
line(st,HV2,'#333',2.600,'5 5');
for(i=1;i<HV.length;i++){a=HV[i-1];c=HV[i];E(st,'line',{x1:a[0],y1:a[1],x2:c[0],y2:c[1],stroke:c[1]>a[1]+.3?'#f01010':'#0a0a9a','stroke-width':3.600,'stroke-linecap':'round'})}
'195,694 293,706 571,740 606,752 508,701 490,696 472,701 445,693 392,694 679,689 750,693 777,694 794,696 829,703 902,697 929,695 954,698 1018,702 1036,706 1055,693 1082,693 1126,707 1151,701 1233,707 1404,690 1430,690 1470,690 1515,690'.split(' ').forEach(function(t){var q=t.split(',');tri(st,+q[0],+q[1],false,'#b01010',4.500)});
'124,771 239,750 346,742 418,701 463,700 482,700 499,697 544,748 597,756 624,760 724,700 768,695 786,695 813,700 858,742 911,698 938,696 992,743 1028,706 1045,700 1064,694 1118,710 1135,702 1189,741 1296,765 1375,694 1417,692 1445,692 1490,692 1547,716'.split(' ').forEach(function(t){var q=t.split(',');tri(st,+q[0],+q[1],true,'#0a0aa8',4.500)});
/* willy */
var w=G('willy');
var cols={l:'#c0c0f6',p:'#fcaaaa',g:'#66bb66',k:'#b87070'};
'47-56g 56-65k 65-83p 92-119p 155-164p 173-182p 200-226p 253-262p 262-271g 271-280l 307-316l 316-325k 325-334g 334-370l 379-388l 406-423l 459-468l 477-486l 495-504l 531-549l 584-602l 611-620k 620-629g 629-674l 710-728l 746-755l 763-781l 799-817l 844-880l 898-916l 934-943l 987-1014l 1023-1041l 1050-1068l 1095-1104l 1113-1140l 1157-1166l 1184-1202l 1220-1229l 1265-1274l 1274-1292k 1292-1308l 1308-1320g 1320-1338l 1350-1360l 1375-1402l 1408-1421l 1436-1470l 1488-1507l 1515-1524l 1533-1551l'.split(' ').forEach(function(t){var q=t.match(/(\d+)-(\d+)(\w)/);E(w,'rect',{x:q[1],y:781,width:q[2]-q[1],height:82,fill:cols[q[3]]})});
var WL=P('28,838n 35,829n 43,828n 51,822n 59,823n 69,835o 80,840o 87,833n 92,837m 106,855m 116,859m 124,855m 133,853m 143,842m 151,833m 159,842m 168,828n 176,830o 194,823n 204,832o 216,838o 227,838o 237,835n 249,823n 261,817n 269,807n 278,805o 294,810o 304,818o 310,812n 322,825m 335,818n 349,806n 363,803g 384,802g 402,805g 418,788g 435,788g 453,795g 463,788g 473,792g 498,789g 516,798g 529,808o 545,795g 559,802g 571,813o 580,815o 596,813n 604,823o 614,832o 622,810n 640,799g 662,787g 689,788g 705,797g 722,788g 758,792g 775,788g 795,793g 815,788g 830,797g 839,806o 848,798g 875,788g 901,792g 938,788g 958,795g 981,805g 991,793g 1009,788g 1018,804g 1026,790g 1071,787g 1091,798g 1099,788g 1109,797g 1130,787g 1152,798g 1164,795g 1179,803g 1197,788g 1215,795g 1224,788g 1242,802g 1250,817o 1260,823o 1269,822n 1280,845o 1285,859m 1301,825n 1320,819n 1332,800n 1356,794g 1380,790g 1420,792g 1460,788g 1500,788g 1517,788g 1528,798g 1547,788g');
var ap='';for(x=28;x<1547;x+=2){var y=I(WL,x);if(y<805.500)ap+='M'+x+' '+y+'V805.5';else if(y>841.500)ap+='M'+x+' 841.5V'+y}
E(w,'path',{d:ap,stroke:'#1a7a1a','stroke-opacity':'.38','stroke-width':2});
E(w,'path',{d:'M28 787.500H1547M28 859.500H1547',stroke:'#000','stroke-dasharray':'5 4','stroke-width':1.200});
E(w,'path',{d:'M28 805.500H1547',stroke:'#1a1a90','stroke-width':2});
E(w,'path',{d:'M28 823.500H1547',stroke:'#14149a','stroke-width':2,'stroke-dasharray':'6 6'});
E(w,'path',{d:'M28 841.500H1547',stroke:'#c81010','stroke-width':1.600});
cline(w,WL,{n:'#0a0aa8',o:'#f89a10',g:'#08b808',m:'#800808'},3.200);
'43,824 258,824 321,824 616,824 1298,826 1310,822'.split(' ').forEach(function(t){var q=t.split(',');tri(w,+q[0],+q[1],true,'#0a0aa8',5.500)});
'52,823 312,823 607,823 1270,823 1285,845'.split(' ').forEach(function(t){var q=t.split(',');tri(w,+q[0],+q[1],false,'#a01010',5.500)});
/* awesome */
var aw=G('awe');
var A=P('28,898 43,887 61,883 78,890 98,893 114,902 135,905 151,898 171,890 196,885 216,889 237,892 257,887 286,882 310,887 335,893 355,886 392,885 420,885 449,882 482,878 506,880 531,888 559,887 588,895 616,899 629,895 640,891 664,883 693,877 722,880 762,874 807,877 828,880 848,888 885,882 946,878 983,889 1007,883 1060,880 1093,882 1142,878 1187,888 1232,886 1252,897 1280,907 1295,915 1310,915 1330,905 1360,892 1400,880 1450,873 1500,875 1513,874 1530,877 1543,880 1547,880');
var Bb=P('28,907 61,895 78,892 98,897 114,902 143,905 171,898 196,890 216,888 241,892 257,892 286,887 310,887 335,890 355,888 392,885 424,885 461,880 506,876 543,880 588,887 616,891 640,889 681,882 750,878 775,873 820,871 873,878 954,873 999,882 1028,880 1081,877 1142,873 1195,882 1232,880 1277,892 1296,912 1312,915 1340,900 1370,890 1410,880 1450,873 1500,871 1530,868 1547,869');
for(k=0;k<170;k++){x=Math.round(1546.3-8.96*k);var ya=I(A,x),yb=I(Bb,x),yp=I(A,x-9);var up=ya<yp;
if(Math.abs(ya-yb)>1)E(aw,'rect',{x:x-3,y:Math.min(ya,yb),width:6,height:Math.abs(ya-yb),fill:yb<ya?'#b8f8c0':'#ffc4c4'});
if(ya<890)E(aw,'rect',{x:x-3,y:ya,width:6,height:890-ya,fill:up?'#1010f0':'#ff10e8'});
else E(aw,'rect',{x:x-3,y:890,width:6,height:ya-890,fill:up?'#109090':'#f01010'});}
E(aw,'path',{d:'M28 890.500H1549',stroke:'#1010f0','stroke-width':1.600});
for(i=1;i<A.length;i++){a=A[i-1];c=A[i];E(aw,'line',{x1:a[0],y1:a[1],x2:c[0],y2:c[1],stroke:c[1]>a[1]+.2?'#b000b0':'#101030','stroke-width':3.200,'stroke-linecap':'round'})}
for(i=1;i<Bb.length;i++){a=Bb[i-1];c=Bb[i];E(aw,'line',{x1:a[0],y1:a[1],x2:c[0],y2:c[1],stroke:c[1]>a[1]+.2?'#ff9a10':'#60fc60','stroke-width':3.400,'stroke-linecap':'round'})}
'115,902 222,890 302,886 384,885 463,880 768,875 1019,884'.split(' ').forEach(function(t){var q=t.split(',');tri(aw,+q[0],+q[1],false,'#f0f000',4.500)});
'142,904 240,892 348,889 437,883 643,890 1009,882'.split(' ').forEach(function(t){var q=t.split(',');tri(aw,+q[0],+q[1],true,'#10e8f0',4.500)});
/* barra */
var br=G('barra'),BC={C:'#aeeaff',D:'#6a6abc',Y:'#ffff80',L:'#33f33a',K:'#660000'};
var cs='28-92C 92-137D 137-155C 155-173D 173-209C 209-218D 218-271C 271-280D 280-316C 316-352D 352-379C 379-441Y 441-450L 450-459Y 459-468L 468-477Y 477-486L 486-522Y 522-549L 549-567Y 567-620L 620-629K 629-647D 647-656C 656-710Y 710-728L 728-737Y 737-790L 790-799Y 799-808L 808-826Y 826-844L 844-853K 853-862D 862-889C 889-898Y 898-907L 907-952Y 952-969L 969-978K 978-1005D 1005-1014C 1014-1032D 1032-1095C 1095-1122D 1122-1148C 1148-1220D 1220-1238C 1238-1265D 1265-1274C 1274-1326D 1326-1507C 1507-1524Y 1524-1533K 1533-1551D'.split(' ').map(function(t){var q=t.match(/(\d+)-(\d+)(\w)/);E(br,'rect',{x:q[1],y:920,width:q[2]-q[1],height:75,fill:BC[q[3]]});return [+q[1],+q[2],q[3]]});
var BT=P('32,951 60,961 92,957 125,955 160,956 200,962 240,975 280,973 310,975 340,973 380,982 408,985 449,988 490,990 522,992 551,989 592,988 612,981 640,980 656,985 681,988 709,991 734,990 762,987 787,986 811,988 836,983 848,982 881,983 905,983 938,986 958,983 973,978 991,969 1003,970 1007,972 1026,967 1044,969 1064,973 1089,978 1105,973 1122,974 1142,979 1150,977 1179,974 1211,969 1232,970 1244,967 1256,963 1280,963 1290,950 1320,924 1328,925 1340,935 1380,950 1420,965 1460,978 1500,982 1517,985 1525,982 1540,978 1547,978');
for(k=0;k<170;k++){x=Math.round(1546.3-8.96*k);y=I(BT,x);var cc='C';cs.forEach(function(q){if(x>=q[0]&&x<q[1])cc=q[2]});
var blue=(cc=='D'||cc=='L'||cc=='K');
E(br,'rect',{x:x-4.500,y:y,width:9,height:995-y,fill:blue?'#1414d8':'#d82020','fill-opacity':blue?.72:.5,stroke:blue?'#1010c0':'#b02020','stroke-opacity':.7})}
E(br,'path',{d:'M28 984.500H1547',stroke:'#801818'});
})();
</script>
</body></html>
